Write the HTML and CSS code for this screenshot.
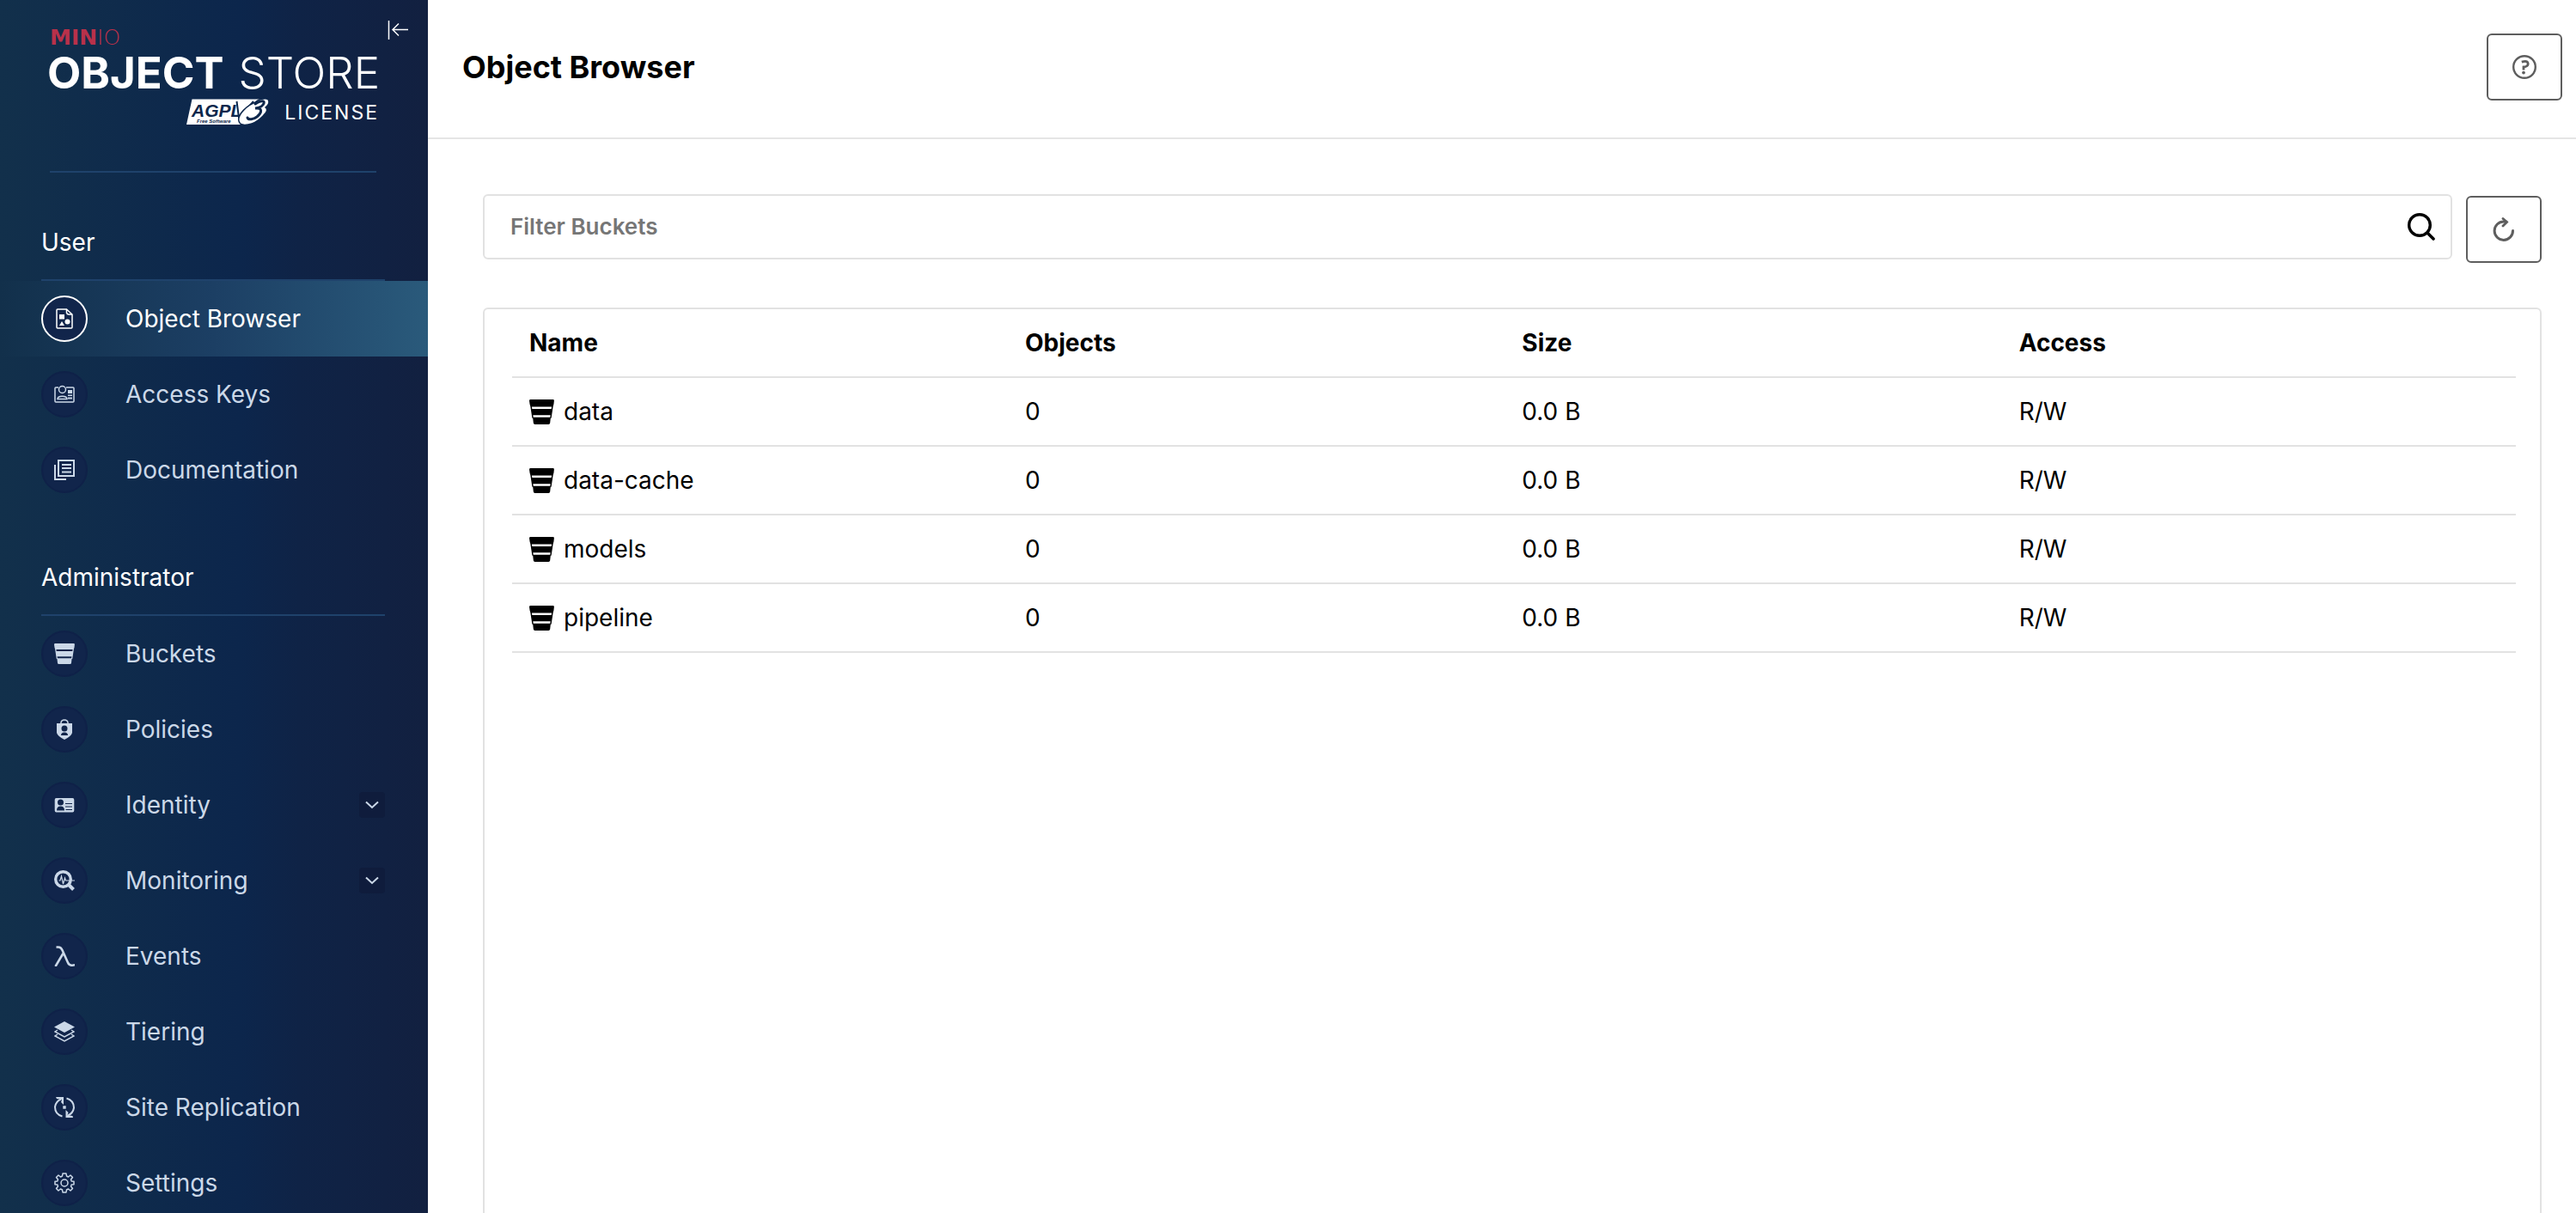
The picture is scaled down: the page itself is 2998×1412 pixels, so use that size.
FILE: index.html
```
<!DOCTYPE html>
<html lang="en">
<head>
<meta charset="utf-8">
<title>Object Browser</title>
<link rel="stylesheet" href="styles.css">
</head>
<body>
<svg class="defs" aria-hidden="true">
  <symbol id="bucket" viewBox="0 0 24 24"><path fill="currentColor" d="M1.200 0H22.800Q24 0 23.900 1.200L23.500 4.800Q23.300 6.800 22 7H2Q.7 6.800.5 4.800L0 1.200Q0 0 1.200 0ZM2 9H22L21 15.200H3ZM3.400 17.200H20.600L20 22.800Q19.800 24 18.600 24H5.400Q4.200 24 4 22.800Z"/><path fill="currentColor" d="M1 6H2.300L4 18H2.800ZM23 6H21.700L20 18H21.200Z"/></symbol>
</svg>
<div class="app">
  <aside class="sidebar">
    <header class="brand">
      <div class="brand-maker"><b>MIN</b><span>IO</span></div>
      <div class="brand-name"><b>OBJECT</b><span>STORE</span></div>
      <div class="brand-license">
        <svg class="agpl" viewBox="0 0 98 34" role="img" aria-label="AGPL v3 Free Software">
          <path fill="#fff" d="M6.500 1.500H90L72 31H0Z"/>
          <text class="agpl-name" x="6" y="22">AGPL</text>
          <text class="agpl-sub" x="12" y="29">Free Software</text>
          <path fill="none" stroke="#0d274c" stroke-width="2" d="M58.500 4L61 23L78 4"/>
          <path fill="#fff" stroke="#0d274c" stroke-width="1.500" d="M83 4C70 8 59 20 61 27C63 35 79 31 87 23C92 18 96 14 92 11C98 6 97 0 90 1C86 1 82 3 79 6"/>
          <path fill="none" stroke="#0d274c" stroke-width="3" stroke-linecap="round" d="M80 7C87 2 93 3 89 8C87 11 82 12 80 12C89 11 88 17 82 22C78 25 72 26 71 23"/>
        </svg>
        <span>LICENSE</span>
      </div>
      <button class="collapse" aria-label="Collapse menu"><svg viewBox="0 0 24 24"><path fill="none" stroke="currentColor" stroke-width="1.500" d="M1.500 1V23M24 11.500H6M13 4.500L6 11.500L13 18.500"/></svg></button>
    </header>
    <nav class="menu">
      <h2>User</h2>
      <a class="item active" href="#"><i><svg viewBox="0 0 24 24"><path fill="none" stroke="currentColor" stroke-width="1.500" d="M4 1H14.500L21 7V22Q21 23 20 23H4Q3 23 3 22V2Q3 1 4 1ZM14.500 1V5Q15 7 17 7H21"/><path fill="currentColor" d="M6 7H12V12.500H6ZM6 20L9 15L12 20Z"/><circle cx="15.500" cy="15.500" r="3" fill="currentColor"/></svg></i><span>Object Browser</span></a>
      <a class="item" href="#"><i><svg viewBox="0 0 24 24"><g fill="none" stroke="currentColor" stroke-width="1.500"><path d="M5 4H2Q1 4 1 5V20Q1 21 2 21H22Q23 21 23 20V5Q23 4 22 4H14"/><circle cx="9.500" cy="6.500" r="4"/><path d="M4 17.500C4 13 15 13 15 17.500Z"/></g><path fill="currentColor" d="M16 7H21V11H16ZM16 12.500H21V14H16ZM16 15.500H21V17.500H16Z"/></svg></i><span>Access Keys</span></a>
      <a class="item" href="#"><i><svg viewBox="0 0 24 24"><path fill="none" stroke="currentColor" stroke-width="2" d="M5 1H23V19H5ZM1 6V23H14"/><path stroke="currentColor" stroke-width="2" d="M9 6H20M9 10H20M9 14.500H20"/></svg></i><span>Documentation</span></a>
      <h2>Administrator</h2>
      <a class="item" href="#"><i><svg><use href="#bucket"/></svg></i><span>Buckets</span></a>
      <a class="item" href="#"><i><svg viewBox="0 0 24 24"><path fill="none" stroke="currentColor" stroke-width="1.500" d="M8 6V4Q8.500 1 12 1Q15.500 1 16 4V6"/><path fill="currentColor" fill-rule="evenodd" d="M3 5H21V16Q20 20 12 24Q4 20 3 16ZM12 7.500A3.500 3.500 0 1 0 12 14.500A3.500 3.500 0 1 0 12 7.500ZM8 19H16Q16 15.500 12 15.500Q8 15.500 8 19Z"/></svg></i><span>Policies</span></a>
      <a class="item" href="#"><i><svg viewBox="0 0 24 24"><path fill="currentColor" fill-rule="evenodd" d="M2.500 4H21.500Q23.300 4 23.300 6V18.500Q23.300 20.500 21.500 20.500H2.500Q.7 20.500.7 18.500V6Q.7 4 2.500 4ZM7.500 5.500A3.500 3.500 0 1 0 7.500 12.500A3.500 3.500 0 1 0 7.500 5.500ZM3 18.500H12Q12 13.500 7.500 13.500Q3 13.500 3 18.500ZM13 10V11H21V10ZM13 13.500V14.500H21V13.500ZM13.500 17V18H21V17Z"/></svg></i><span>Identity</span><em><svg viewBox="0 0 14 8"><path d="M0 .5L7 7L14 .5"/></svg></em></a>
      <a class="item" href="#"><i><svg viewBox="0 0 24 24"><circle cx="10.500" cy="10.500" r="8.800" fill="none" stroke="currentColor" stroke-width="3.400"/><path fill="none" stroke="currentColor" stroke-width="4" d="M16.500 16.500L22.500 22.500"/><path fill="none" stroke="currentColor" stroke-width="1.200" d="M5.500 12H7L8.500 7L10.500 16L12.500 9L13.500 12H24"/></svg></i><span>Monitoring</span><em><svg viewBox="0 0 14 8"><path d="M0 .5L7 7L14 .5"/></svg></em></a>
      <a class="item" href="#"><i><svg viewBox="0 0 24 24"><path fill="none" stroke="currentColor" stroke-width="2.600" d="M2.500 1.500H5Q8 1.500 9.500 5L16 19.500Q17.500 23 21 22.700L24 22.300M11 8L1.500 24"/></svg></i><span>Events</span></a>
      <a class="item" href="#"><i><svg viewBox="0 0 24 24"><path fill="currentColor" d="M12 0L24 6.500L12 13L0 6.500Z"/><path fill="none" stroke="currentColor" stroke-width="1.500" d="M4 10L1 12L12 18L23 12L20 10M4 15L1 17L12 23L23 17L20 15"/></svg></i><span>Tiering</span></a>
      <a class="item" href="#"><i><svg viewBox="0 0 24 24"><path fill="none" stroke="currentColor" stroke-width="2" d="M9.500 22.500Q1 20 1 11.500Q2 5 8 2.500M14.500 1.500Q23 4 23 12.500Q22 19 16 21.500"/><path fill="currentColor" d="M2 0H11V9L8 6L9 3L3 2ZM22 24H13.500V15L16.500 18L15.500 21L21.500 22ZM10.300 10.300H13.700V13.700H10.300Z"/></svg></i><span>Site Replication</span></a>
      <a class="item" href="#"><i><svg viewBox="0 0 24 24"><g fill="none" stroke="currentColor" stroke-width="1.500"><path stroke-linejoin="round" d="M10 1H14L14.500 4L16.500 5L19 3L21.500 5.500L19.500 8L20.200 10L23 10.300V13.700L20.200 14L19.500 16L21.500 18.500L19 21L16.500 19L14.500 20L14 23H10L9.500 20L7.500 19L5 21L2.500 18.500L4.500 16L3.800 14L1 13.700V10.300L3.800 10L4.500 8L2.500 5.500L5 3L7.500 5L9.500 4Z"/><circle cx="12" cy="12" r="4"/></g></svg></i><span>Settings</span></a>
    </nav>
  </aside>
  <main class="main">
    <header class="topbar">
      <h1>Object Browser</h1>
      <button class="tool" aria-label="Help"><svg viewBox="0 0 28 28"><circle cx="14" cy="14" r="12.800" fill="none" stroke="currentColor" stroke-width="2.400"/><path fill="none" stroke="currentColor" stroke-width="2.800" d="M10.800 8.200Q18 5.800 18.200 10.500Q18 13.600 13 14V17.500"/><circle cx="13" cy="20.600" r="1.900" fill="currentColor"/></svg></button>
    </header>
    <div class="content">
      <div class="filters">
        <label class="search">
          <input type="text" placeholder="Filter Buckets" aria-label="Filter Buckets">
          <svg viewBox="0 0 32 32"><circle cx="14" cy="14" r="12.300" fill="none" stroke="#000" stroke-width="3.400"/><path stroke="#000" stroke-width="3.600" stroke-linecap="round" d="M23 23L30 30"/></svg>
        </label>
        <button class="tool" aria-label="Reload"><svg viewBox="0 0 28 28"><g fill="none" stroke="currentColor" stroke-width="3" stroke-linecap="round"><path d="M24.500 15.500A10.700 10.700 0 1 1 14 5H17"/><path stroke-width="2.800" d="M13 1.500L17.500 5.500L13 10"/></g></svg></button>
      </div>
      <section class="panel">
        <table>
          <colgroup><col class="first"><col><col><col></colgroup>
          <thead><tr><th>Name</th><th>Objects</th><th>Size</th><th>Access</th></tr></thead>
          <tbody>
            <tr><td><div class="name"><svg><use href="#bucket"/></svg>data</div></td><td>0</td><td>0.0 B</td><td>R/W</td></tr>
            <tr><td><div class="name"><svg><use href="#bucket"/></svg>data-cache</div></td><td>0</td><td>0.0 B</td><td>R/W</td></tr>
            <tr><td><div class="name"><svg><use href="#bucket"/></svg>models</div></td><td>0</td><td>0.0 B</td><td>R/W</td></tr>
            <tr><td><div class="name"><svg><use href="#bucket"/></svg>pipeline</div></td><td>0</td><td>0.0 B</td><td>R/W</td></tr>
          </tbody>
        </table>
      </section>
    </div>
  </main>
</div>
</body>
</html>
```
FILE: styles.css
```
* { box-sizing: border-box; }
body { margin: 0; font-family: Inter, "Liberation Sans", sans-serif; font-size: 28px; color: #000; background: #fff; }
button { padding: 0; background: none; cursor: pointer; }
.defs { display: none; }
.app { display: flex; height: 100vh; overflow: hidden; }

.sidebar { flex: 0 0 498px; overflow: hidden; color: #fff; background: linear-gradient(90deg, #12304b 0%, #0c264c 56%, #0f2346 70%, #122040 100%); }
.brand { position: relative; display: flex; flex-direction: column; height: 201px; margin: 0 60px 0 58px; padding-top: 32px; border-bottom: 2px solid #1f426b; }
.brand-maker { font: 25px/24px "DejaVu Sans", sans-serif; color: #b9314a; }
.brand-maker b { font-weight: 700; }
.brand-maker span { font-weight: 200; }
.brand-name { display: flex; justify-content: space-between; margin: 0 -4px 0 -3px; font-size: 51px; line-height: 58px; }
.brand-name b { font-weight: 700; }
.brand-name span { font-weight: 300; }
.brand-license { display: flex; justify-content: flex-end; align-items: center; gap: 16px; height: 34px; margin-right: -3px; font-size: 23px; letter-spacing: 2px; }
.agpl { width: 98px; height: 34px; }
.agpl-name { font: italic 700 21px "Liberation Sans Narrow", "Liberation Sans", sans-serif; fill: #0d274c; letter-spacing: 0; }
.agpl-sub { font: italic 700 6px "Liberation Sans", sans-serif; fill: #0d274c; letter-spacing: 0; }
.collapse { position: absolute; top: 23px; right: -37px; width: 24px; height: 24px; border: 0; color: #fff; }
.collapse svg { display: block; width: 24px; height: 24px; }

.menu h2 { display: flex; align-items: flex-end; height: 126px; margin: 0 50px 0 48px; padding-bottom: 26px; border-bottom: 2px solid #1f426b; font-size: 28px; line-height: 34px; font-weight: 400; }
.item { display: flex; align-items: center; height: 88px; padding: 0 50px 0 48px; color: #cbd8e8; text-decoration: none; }
.item i { display: flex; align-items: center; justify-content: center; width: 54px; height: 54px; margin-right: 44px; border: 2px solid #0f2148; border-radius: 50%; background: #11254b; }
.item i svg { width: 24px; height: 24px; }
.item em { display: flex; align-items: center; justify-content: center; width: 30px; height: 30px; margin-left: auto; border-radius: 4px; background: #0f1c3c; }
.item em svg { width: 14px; height: 8px; overflow: visible; fill: none; stroke: currentColor; stroke-width: 2; }
.item.active { color: #fff; background: linear-gradient(90deg, #12304b 0%, #1c3f64 50%, #2a5a7b 100%); }
.item.active i { border-color: #fff; }

.main { display: flex; flex: 1; flex-direction: column; min-width: 0; }
.topbar { display: flex; flex: none; align-items: center; justify-content: space-between; height: 162px; padding: 0 16px 4px 40px; border-bottom: 2px solid #e5e5e5; }
h1 { margin: 0; font-size: 36px; line-height: 44px; font-weight: 700; }
.tool { display: flex; flex: none; align-items: center; justify-content: center; width: 88px; height: 78px; border: 2px solid #5e5e5e; border-radius: 6px; color: #5e5e5e; }
.tool svg { width: 28px; height: 28px; }
.content { padding: 64px 40px 0 64px; }
.filters { display: flex; align-items: flex-end; gap: 16px; height: 80px; }
.search { display: flex; flex: 1; align-items: center; align-self: flex-start; height: 76px; padding: 0 18px 0 30px; border: 2px solid #e2e2e2; border-radius: 6px; }
.search input { flex: 1; padding: 0; border: 0; outline: 0; background: none; font: 600 26px/32px Inter, "Liberation Sans", sans-serif; }
.search input::placeholder { color: #767676; opacity: 1; }
.search svg { width: 32px; height: 32px; }
.panel { min-height: 1200px; margin-top: 52px; padding: 0 28px 0 32px; border: 2px solid #e2e2e2; border-radius: 6px; }
table { width: 100%; table-layout: fixed; border-collapse: separate; border-spacing: 0; }
.first { width: 25.6%; }
th, td { height: 80px; padding: 0; border-bottom: 2px solid #e2e2e2; text-align: left; }
th { font-weight: 700; }
th:first-child, td:first-child { padding-left: 20px; }
.name { display: flex; align-items: center; gap: 11px; }
.name svg { width: 29px; height: 29px; }
```
